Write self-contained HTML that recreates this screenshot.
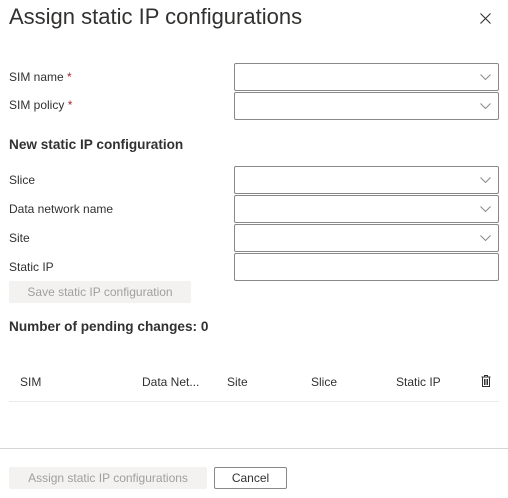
<!DOCTYPE html>
<html><head><style>
body{margin:0;width:508px;height:498px;background:#fff;font-family:"Liberation Sans",sans-serif;color:#323130;position:relative;overflow:hidden}
.a{position:absolute}
.lbl{position:absolute;left:9px;font-size:12px}
.dd{position:absolute;left:234px;width:263px;height:26px;border:1px solid #8a8886;border-radius:2px}
.dd svg{position:absolute;right:7px;top:10px}
.b{font-weight:bold;font-size:13.6px}
.th{position:absolute;top:375px;font-size:12px}
</style></head><body>
<div class="a" style="left:9px;top:4px;font-size:22px;">Assign static IP configurations</div>
<svg class="a" style="left:480px;top:13px" width="11" height="11"><path d="M0.5 0.5L10.5 10.5M10.5 0.5L0.5 10.5" stroke="#323130" stroke-width="1.1"/></svg>
<div class="lbl" style="top:70px">SIM name <span style="color:#a4262c">*</span></div>
<div class="lbl" style="top:98px">SIM policy <span style="color:#a4262c">*</span></div>
<div class="dd" style="top:63px"><svg width="11" height="6"><path d="M0.5 0.5L5.5 5.5L10.5 0.5" fill="none" stroke="#8a8886"/></svg></div>
<div class="dd" style="top:92px"><svg width="11" height="6"><path d="M0.5 0.5L5.5 5.5L10.5 0.5" fill="none" stroke="#8a8886"/></svg></div>
<div class="a b" style="left:9px;top:137px">New static IP configuration</div>
<div class="lbl" style="top:173px">Slice</div>
<div class="lbl" style="top:202px">Data network name</div>
<div class="lbl" style="top:231px">Site</div>
<div class="lbl" style="top:260px">Static IP</div>
<div class="dd" style="top:166px"><svg width="11" height="6"><path d="M0.5 0.5L5.5 5.5L10.5 0.5" fill="none" stroke="#8a8886"/></svg></div>
<div class="dd" style="top:195px"><svg width="11" height="6"><path d="M0.5 0.5L5.5 5.5L10.5 0.5" fill="none" stroke="#8a8886"/></svg></div>
<div class="dd" style="top:224px"><svg width="11" height="6"><path d="M0.5 0.5L5.5 5.5L10.5 0.5" fill="none" stroke="#8a8886"/></svg></div>
<div class="dd" style="top:253px"></div>
<div class="a" style="left:9px;top:281px;width:182px;height:22px;background:#f3f2f1;border-radius:2px;color:#a19f9d;font-size:12px;line-height:22px;text-align:center">Save static IP configuration</div>
<div class="a b" style="left:9px;top:319px">Number of pending changes: 0</div>
<div class="th" style="left:20px">SIM</div>
<div class="th" style="left:142px">Data Net...</div>
<div class="th" style="left:227px">Site</div>
<div class="th" style="left:311px">Slice</div>
<div class="th" style="left:396px">Static IP</div>
<svg class="a" style="left:481px;top:375px" width="10" height="12"><path d="M0.5 2H9.5M3.5 2V0.5H6.5V2M1.5 2V11.5H8.5V2M3.5 4V10M5 4V10M6.5 4V10" fill="none" stroke="#323130"/></svg>
<div class="a" style="left:9px;top:401px;width:490px;height:1px;background:#edebe9"></div>
<div class="a" style="left:0;top:448px;width:508px;height:1px;background:#d6d6d6"></div>
<div class="a" style="left:9px;top:467px;width:198px;height:22px;background:#f3f2f1;border-radius:2px;color:#a19f9d;font-size:12px;line-height:22px;text-align:center">Assign static IP configurations</div>
<div class="a" style="left:214px;top:467px;width:71px;height:20px;border:1px solid #8a8886;border-radius:2px;font-size:12px;line-height:20px;text-align:center">Cancel</div>
</body></html>
